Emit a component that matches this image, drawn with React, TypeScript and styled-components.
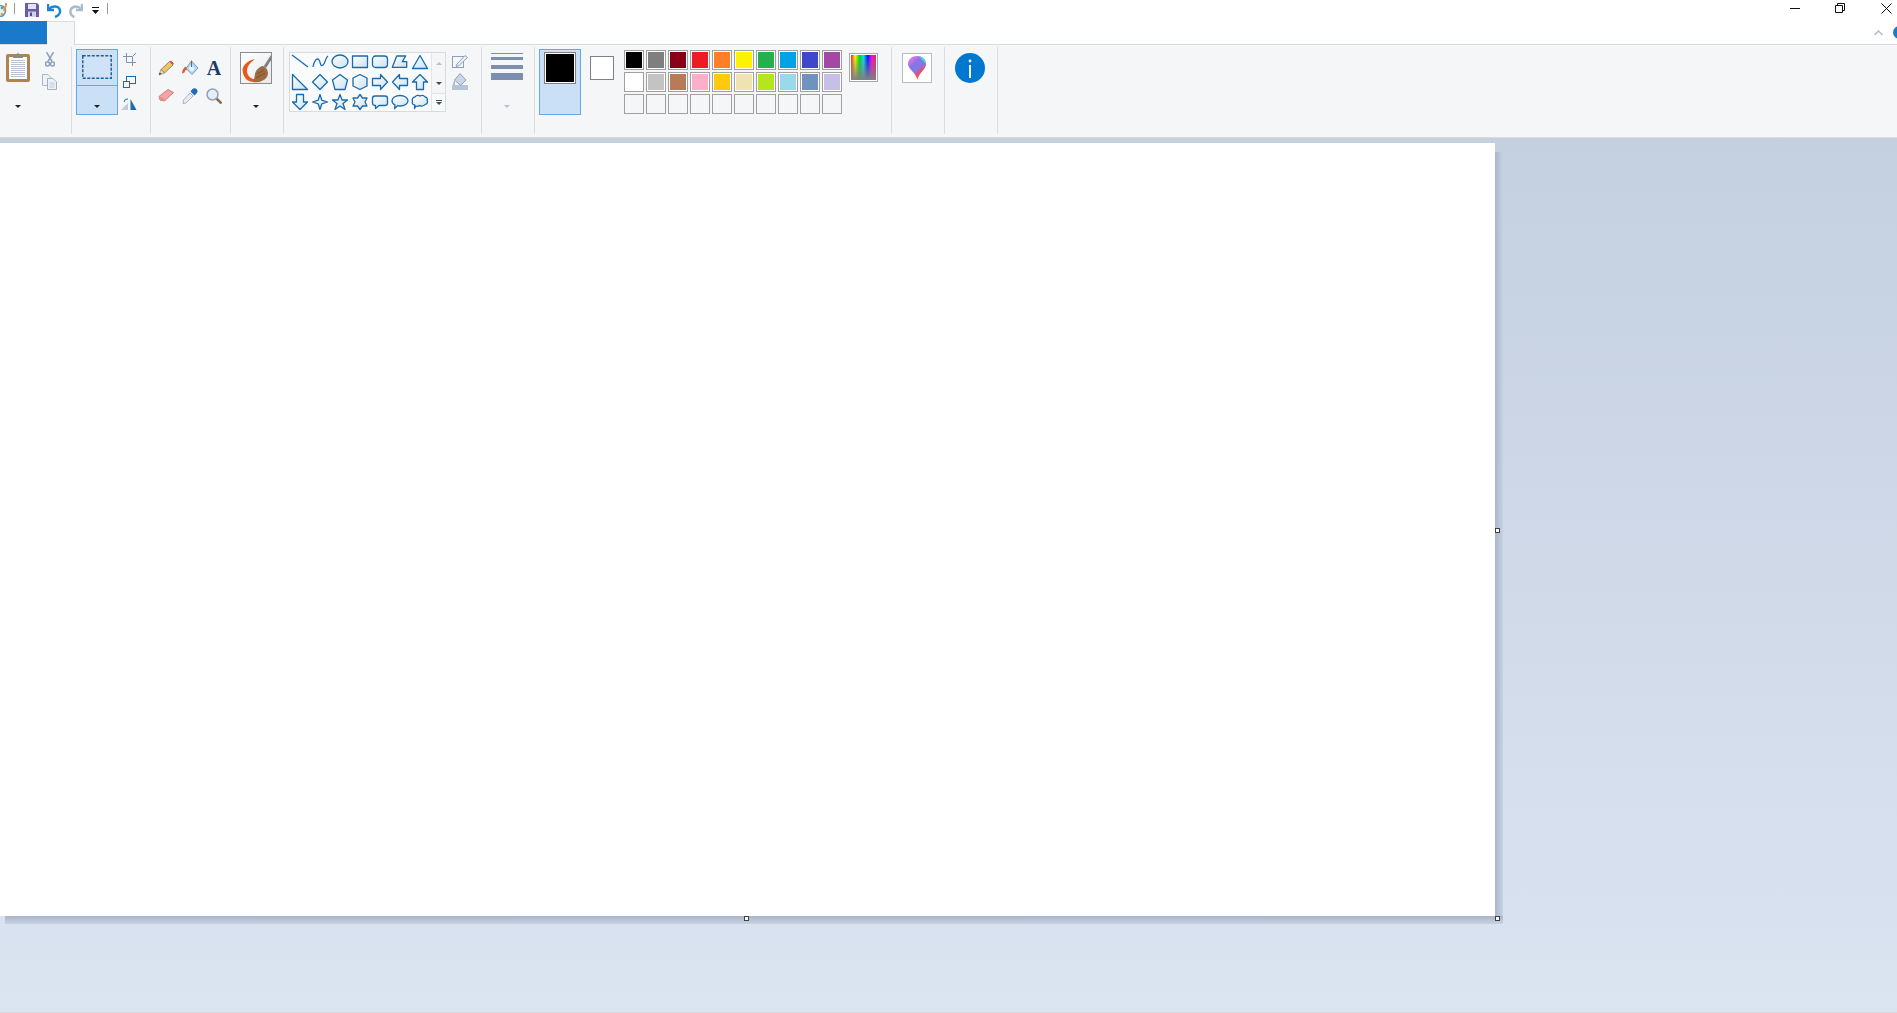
import styled, { createGlobalStyle } from "styled-components";

const GlobalStyle = createGlobalStyle`
  html, body {
    margin: 0;
    padding: 0;
    overflow: hidden;
    background: #ffffff;
    font-family: "Liberation Sans", Arial, sans-serif;
  }
  * {
    box-sizing: border-box;
  }
`;

const colorsRow1 = ["#000000", "#7f7f7f", "#880015", "#ed1c24", "#ff7f27", "#fff200", "#22b14c", "#00a2e8", "#3f48cc", "#a349a4"];
const colorsRow2 = ["#ffffff", "#c3c3c3", "#b97a57", "#ffaec9", "#ffc90e", "#efe4b0", "#b5e61d", "#99d9ea", "#7092be", "#c8bfe7"];
const emptyColors = Array.from({ length: 10 }, () => "");

// every shape of the gallery, drawn in a 20x20 cell
const shapes = [
  <path d="M2 3L18 15" fill="none" />,
  <path d="M3 15C4 9 7 5 9 8C11 11 10 15 13 13C15.500 11.500 15 6 18 4" fill="none" />,
  <ellipse cx="10" cy="9.500" rx="8" ry="6.500" />,
  <rect x="2.500" y="4" width="15" height="11.500" />,
  <rect x="2.500" y="4" width="15" height="11.500" rx="3" />,
  <path d="M6.700 4H15.700L12.300 9.700H16.700V15.300H2.300Z" />,
  <path d="M10 3.500L17.500 16.500H2.500Z" />,
  <path d="M2.500 2.500L17.500 17.500H2.500Z" />,
  <path d="M10 2.500L17.500 10L10 17.500L2.500 10Z" />,
  <path d="M10 2.500L17.500 8L15 17.500H5L2.500 8Z" />,
  <path d="M10 2.500L17 6V14L10 17.500L3 14V6Z" />,
  <path d="M2.500 6.500H10.500V2.500L17.500 10L10.500 17.500V13.500H2.500Z" />,
  <path d="M17.500 6.500H9.500V2.500L2.500 10L9.500 17.500V13.500H17.500Z" />,
  <path d="M10 2.500L17.500 10H13.500V17.500H6.500V10H2.500Z" />,
  <path d="M10 17.500L17.500 10H13.500V2.500H6.500V10H2.500Z" />,
  <path d="M10 2.500L11.800 8.200L17.500 10L11.800 11.800L10 17.500L8.200 11.800L2.500 10L8.200 8.200Z" />,
  <path d="M10 2.500L12 8H17.500L13 11.500L15 17.500L10 14L5 17.500L7 11.500L2.500 8H8Z" />,
  <path d="M10 2.500L12.500 6H17L15 10L17 14H12.500L10 17.500L7.500 14H3L5 10L3 6H7.500Z" />,
  <path d="M5 4H15Q17.500 4 17.500 6.500V11Q17.500 13.500 15 13.500H9L5.500 16.500V13.500H5Q2.500 13.500 2.500 11V6.500Q2.500 4 5 4Z" />,
  <path d="M10 3.500C14.500 3.500 18 5.800 18 8.700S14.500 14 10 14Q8.500 14 7.500 13.700L4.500 16.500L5 12.800C3 12 2 10.400 2 8.700C2 5.800 5.500 3.500 10 3.500Z" />,
  <path d="M5 5C6 3 9 3 10 4C12 3 14 3.500 15 5C17 5 18 7 17 8.500C18.500 10 17 12.500 15 12.500C14 14 11 14.500 9.500 13.500C8.500 14.500 7 14.500 6 14L4.500 16.500L4.800 13C3 13 1.500 11 2.500 9.500C1.500 7.500 3 5 5 5Z" />,
];

const App = () => {
  return (
    <Page>
      <GlobalStyle />
      <TitleBar>
        <QuickIcon $left={0}>
          <svg width="7" height="14" viewBox="0 0 7 14">
            <circle cx="0" cy="8" r="5.500" fill="#e8f1f7" stroke="#4c9ad0" strokeWidth="1.500" />
            <circle cx="2" cy="11" r="1.300" fill="#e7a03c" />
            <circle cx="2" cy="5" r="1.300" fill="#5aa65a" />
            <path d="M6.500 0L4 8" stroke="#e39244" strokeWidth="2" />
          </svg>
        </QuickIcon>
        <QuickSeparator $left={7} />
        <QuickIcon $left={10}>
          <svg width="14" height="14" viewBox="0 0 14 14">
            <path d="M0 0H12L14 2V14H0Z" fill="#6c5ba7" />
            <rect x="3" y="1" width="8" height="5" fill="#dfe6f2" />
            <rect x="3" y="8.500" width="8" height="5.500" fill="#cfd3e6" />
            <rect x="5" y="9.500" width="2" height="3.500" fill="#4d4d8f" />
          </svg>
        </QuickIcon>
        <QuickIcon $left={8}>
          <svg width="15" height="15" viewBox="0 0 15 15">
            <path d="M1 1V7H7" fill="none" stroke="#1a84d8" strokeWidth="2.500" />
            <path d="M2 6C5 2.500 12 2.500 13 7.500C13.500 10.500 11 13 8 14" fill="none" stroke="#1a84d8" strokeWidth="2.500" />
          </svg>
        </QuickIcon>
        <QuickIcon $left={7}>
          <svg width="14" height="15" viewBox="0 0 14 15">
            <path d="M13 1V7H7" fill="none" stroke="#aabbcf" strokeWidth="2.500" />
            <path d="M12 6C9 2.500 3 2.500 1.500 7.500C1 10.500 3 13 5.500 14" fill="none" stroke="#aabbcf" strokeWidth="2.500" />
          </svg>
        </QuickIcon>
        <QuickIcon $left={9}>
          <svg width="7" height="7" viewBox="0 0 7 7">
            <rect x="0" y="0" width="7" height="1" fill="#111" />
            <path d="M0 3H7L3.500 7Z" fill="#111" />
          </svg>
        </QuickIcon>
        <QuickSeparator $left={8} />
        <WindowButtons>
          <WindowButton aria-label="Minimize">
            <svg width="10" height="10" viewBox="0 0 10 10">
              <path d="M0 5.500H10" stroke="#111" />
            </svg>
          </WindowButton>
          <WindowButton aria-label="Restore">
            <svg width="10" height="10" viewBox="0 0 10 10">
              <path d="M2.500 2.500V0.500H9.500V7.500H7.500M0.500 2.500H7.500V9.500H0.500Z" fill="none" stroke="#111" />
            </svg>
          </WindowButton>
          <WindowButton aria-label="Close" $pad={18}>
            <svg width="11" height="11" viewBox="0 0 11 11">
              <path d="M0.500 0.500L10.500 10.500M10.500 0.500L0.500 10.500" stroke="#111" />
            </svg>
          </WindowButton>
        </WindowButtons>
      </TitleBar>

      <TabRow>
        <FileTab />
        <HomeTab />
        <TabRowEnd>
          <svg width="9" height="6" viewBox="0 0 9 6">
            <path d="M0.500 5L4.500 1L8.500 5" fill="none" stroke="#b4bbc6" strokeWidth="1.500" />
          </svg>
          <HelpDot />
        </TabRowEnd>
      </TabRow>

      <Ribbon>
        <Group $width={72}>
          <BigColumn $width={36}>
            <svg width="24" height="30" viewBox="0 0 24 30">
              <rect x="0" y="2" width="24" height="28" rx="2" fill="#b0824c" />
              <rect x="3" y="5" width="18" height="22" fill="#ffffff" />
              <path d="M5 8.500H19M5 10.500H19M5 12.500H19M5 14.500H19M5 16.500H19M5 18.500H19M5 20.500H19M5 22.500H19M5 24.500H19" stroke="#b7c4d6" />
              <path d="M7 6V3H10.500L12 0.500L13.500 3H17V6Z" fill="#8a8a8a" />
            </svg>
            <DropArrow />
          </BigColumn>
          <IconColumn $width={27} $top={5} $gap={7}>
            <svg width="10" height="15" viewBox="0 0 10 15">
              <path d="M1.500 0L7 9.500M8.500 0L3 9.500" stroke="#8ea2bd" strokeWidth="1.500" />
              <circle cx="2.500" cy="12" r="2" fill="none" stroke="#8ea2bd" strokeWidth="1.500" />
              <circle cx="7.500" cy="12" r="2" fill="none" stroke="#8ea2bd" strokeWidth="1.500" />
            </svg>
            <svg width="15" height="16" viewBox="0 0 15 16">
              <path d="M0.500 0.500H6L9 3.500V11.500H0.500Z" fill="#eef2f7" stroke="#a9b8cd" />
              <path d="M5.500 4.500H11L14.500 8V15.500H5.500Z" fill="#eef2f7" stroke="#a0b0c7" />
              <path d="M7.500 9H12.500M7.500 11H12.500M7.500 13H12.500" stroke="#bcc8d9" />
            </svg>
          </IconColumn>
        </Group>

        <Group $width={79} $left={4}>
          <SplitButton>
            <SplitTop>
              <svg width="30" height="24" viewBox="0 0 30 24">
                <rect x="0.750" y="0.750" width="28.500" height="22.500" fill="#cfe2f7" stroke="#1f5f99" strokeWidth="1.500" strokeDasharray="3 1.500" />
              </svg>
            </SplitTop>
            <SplitBottom>
              <DropArrow />
            </SplitBottom>
          </SplitButton>
          <IconColumn $width={16} $top={6} $gap={10} $margin={3}>
            <svg width="13" height="13" viewBox="0 0 13 13">
              <path d="M3.500 0V9.500H13M0 3.500H9.500V13M9.500 3.500L13 0" fill="none" stroke="#7f93b0" />
            </svg>
            <svg width="13" height="12" viewBox="0 0 13 12">
              <rect x="3.500" y="0.500" width="9" height="7" fill="#f5f6f7" stroke="#1c6bb0" />
              <rect x="0.500" y="5.500" width="6" height="6" fill="#f5f6f7" stroke="#1c6bb0" />
            </svg>
            <svg width="16" height="12" viewBox="0 0 16 12">
              <path d="M0 12L7 5V12Z" fill="#c8ccd2" />
              <path d="M9.500 1V12H15.500Z" fill="#1c6bb0" />
              <path d="M3 4Q3.500 0.500 7 1" fill="none" stroke="#1c6bb0" />
            </svg>
          </IconColumn>
        </Group>

        <Group $width={80} $left={3}>
          <ToolGrid>
            <svg width="16" height="16" viewBox="0 0 16 16">
              <path d="M3 9.500L11.500 1.500L15 5L6.500 13Z" fill="#ecc666" stroke="#6e6048" strokeWidth="0.700" />
              <path d="M11.500 1.500L13 0.500L16 3.500L15 5Z" fill="#d9534f" />
              <path d="M3 9.500L6.500 13L1 15Z" fill="#ead9b8" stroke="#6e6048" strokeWidth="0.500" />
              <path d="M1.800 12.500L3.300 14L1 15Z" fill="#333" />
            </svg>
            <svg width="17" height="17" viewBox="0 0 17 17">
              <path d="M9.500 1L16 8L10 14.500L4 8.500Z" fill="#b9d6ef" stroke="#6d9cc6" />
              <path d="M9 5L13 8.500L10 12L6.500 8.500Z" fill="#e9f2fa" />
              <path d="M9.500 0.500L9.500 7" stroke="#5c6d80" />
              <path d="M4 6.500Q0.500 8 0 13.500L2.500 12.500Q2.500 10 5 9.500Z" fill="#e8571b" />
            </svg>
            <ToolLetter>A</ToolLetter>
            <svg width="16" height="16" viewBox="0 0 16 16">
              <path d="M1 8.500L10 1.500L15.500 4.500L6.500 13L2 12Z" fill="#f5a3a5" stroke="#cf7f82" />
              <path d="M2 12L1 8.500L6 10.500L6.500 13Z" fill="#e08c90" />
            </svg>
            <svg width="16" height="16" viewBox="0 0 16 16">
              <path d="M10 1.500Q12.500 -1 15 1.500Q16.500 4 14 6L12.500 7.500L8.500 3.500Z" fill="#1d6cb5" />
              <path d="M8 5L11 8L4 15L1 15.500L1.500 12Z" fill="#e8ecf1" stroke="#8c99aa" strokeWidth="0.700" />
            </svg>
            <svg width="16" height="16" viewBox="0 0 16 16">
              <path d="M10 10L15.500 15.500" stroke="#8c6a4a" strokeWidth="2.500" />
              <circle cx="6.500" cy="6.500" r="5.500" fill="#e3eef8" stroke="#93a3b5" strokeWidth="1.500" />
            </svg>
          </ToolGrid>
        </Group>

        <Group $width={53}>
          <BigColumn $width={50}>
            <BrushFrame>
              <svg width="30" height="30" viewBox="0 0 30 30">
                <path d="M24 14L31 3" stroke="#7d8188" strokeWidth="3" />
                <path d="M14 6C5 8 0 14 2 20C3 25 7 29 13 29L18 27C12 27 6 24 6 18C6 13 10 9 14 6Z" fill="#e8571b" />
                <path d="M22 13C27 15 28 20 26 24C23 28 18 30 12 29C14 26 13 22 15 18C17 15 20 13 22 13Z" fill="#9c6b3f" />
                <path d="M16 21L23 17M15 25L24 20" stroke="#7d5430" />
              </svg>
            </BrushFrame>
            <DropArrow />
          </BigColumn>
        </Group>

        <Group $width={198} $left={5}>
          <Gallery>
            <ShapeGrid>
              {shapes.map((shape, i) => (
                <svg key={i} width="20" height="20" viewBox="0 0 20 20" fill={`url(#shape-fill-${i})`} stroke="#1b6aab" strokeWidth="1.300" strokeLinejoin="round">
                  <defs>
                    <linearGradient id={`shape-fill-${i}`} x1="0" y1="0" x2="1" y2="1">
                      <stop offset="0" stopColor="#ffffff" />
                      <stop offset="1" stopColor="#c9e2f1" />
                    </linearGradient>
                  </defs>
                  {shape}
                </svg>
              ))}
            </ShapeGrid>
            <GalleryScroll>
              <ScrollButton>
                <Triangle $color="#b9c0ca" $up />
              </ScrollButton>
              <ScrollButton>
                <Triangle $color="#444b55" />
              </ScrollButton>
              <ScrollMore>
                <ScrollBar />
                <Triangle $color="#444b55" />
              </ScrollMore>
            </GalleryScroll>
          </Gallery>
          <IconColumn $width={16} $top={7} $gap={5} $margin={6}>
            <svg width="16" height="14" viewBox="0 0 16 14">
              <rect x="0.500" y="2.500" width="11" height="11" fill="#f5f6f7" stroke="#8ca0bb" />
              <path d="M5 10L13 1.500L15.500 3.500L7 11.500L4 12.500Z" fill="#eef2f7" stroke="#8ca0bb" />
            </svg>
            <svg width="16" height="17" viewBox="0 0 16 17">
              <rect x="0" y="12" width="16" height="5" fill="#b7c4d6" />
              <path d="M8 0.500L14 7L8.500 12.500L2.500 7Z" fill="#c9d6e6" stroke="#8ca0bb" />
              <path d="M3 7Q0.500 9 1 12H3Z" fill="#a5b4c8" />
            </svg>
          </IconColumn>
        </Group>

        <Group $width={53}>
          <BigColumn $width={50}>
            <SizeLines>
              <SizeLine $height={1} $gap={0} />
              <SizeLine $height={3} $gap={3} />
              <SizeLine $height={4} $gap={5} />
              <SizeLine $height={7} $gap={4} />
            </SizeLines>
            <DropArrow $color="#b9c0ca" />
          </BigColumn>
        </Group>

        <Group $width={357} $left={4}>
          <ColorButton>
            <ColorSwatch $size={32} $color="#000000" />
          </ColorButton>
          <SecondColor>
            <ColorSwatch $size={24} $color="#ffffff" />
          </SecondColor>
          <Palette>
            {[...colorsRow1, ...colorsRow2, ...emptyColors].map((color, i) => (
              <PaletteCell key={i} $color={color} />
            ))}
          </Palette>
          <EditColors />
        </Group>

        <Group $width={53} $left={10}>
          <Paint3dButton>
            <svg width="22" height="26" viewBox="0 0 22 26">
              <defs>
                <linearGradient id="balloon-fill" x1="0" y1="0.100" x2="0.600" y2="1">
                  <stop offset="0" stopColor="#f77be0" />
                  <stop offset="0.350" stopColor="#8a72e8" />
                  <stop offset="0.600" stopColor="#7d7de0" />
                  <stop offset="0.800" stopColor="#f0476f" />
                  <stop offset="1" stopColor="#f9a21f" />
                </linearGradient>
              </defs>
              <path d="M11 1C16 1 20 4.500 20 9C20 14 13.500 17 11.500 25C9.500 17 2 14 2 9C2 4.500 6 1 11 1Z" fill="url(#balloon-fill)" />
              <path d="M13 1.300C17 2 20 5 20 9C18 7 15 4 13 1.300Z" fill="#3fd6e8" />
            </svg>
          </Paint3dButton>
        </Group>

        <Group $width={53} $left={10}>
          <InfoButton aria-label="Info">
            <svg width="30" height="30" viewBox="0 0 30 30">
              <circle cx="15" cy="15" r="15" fill="#0078d0" />
              <rect x="14" y="12" width="2" height="13" fill="#ffffff" />
              <circle cx="15" cy="8" r="1.400" fill="#ffffff" />
            </svg>
          </InfoButton>
        </Group>
      </Ribbon>

      <Workspace>
        <Canvas>
          <Handle $x={744} $y={916} />
          <Handle $x={1495} $y={528} />
          <Handle $x={1495} $y={916} />
        </Canvas>
      </Workspace>
    </Page>
  );
};

export default App;

const Page = styled.div`
  display: flex;
  flex-direction: column;
  width: 1897px;
  height: 100vh;
  overflow: hidden;
`;

const TitleBar = styled.div`
  display: flex;
  align-items: center;
  height: 21px;
  flex: none;
  background: #ffffff;
`;

const QuickIcon = styled.div<{ $left: number }>`
  display: flex;
  margin-left: ${(p) => p.$left}px;
  margin-top: -1px;
`;

const QuickSeparator = styled.div<{ $left: number }>`
  width: 1px;
  height: 11px;
  margin-top: -4px;
  margin-left: ${(p) => p.$left}px;
  background: #9a9a9a;
`;

const WindowButtons = styled.div`
  display: flex;
  margin-left: auto;
  margin-right: -11px;
  align-self: flex-start;
`;

const WindowButton = styled.button<{ $pad?: number }>`
  display: flex;
  align-items: center;
  width: 45px;
  height: 16px;
  padding: 0 0 0 ${(p) => p.$pad ?? 17}px;
  border: 0;
  background: transparent;
`;

const TabRow = styled.div`
  display: flex;
  height: 24px;
  flex: none;
  border-bottom: 1px solid #d9dadc;
`;

const FileTab = styled.div`
  width: 47px;
  height: 23px;
  background: #1979ca;
`;

const HomeTab = styled.div`
  width: 28px;
  height: 24px;
  background: #f5f6f7;
  border: 1px solid #d9dadc;
  border-bottom: 0;
  border-left: 0;
`;

const TabRowEnd = styled.div`
  display: flex;
  align-items: center;
  gap: 10px;
  margin-left: auto;
  margin-right: -9px;
  height: 23px;
`;

const HelpDot = styled.div`
  width: 13px;
  height: 13px;
  border-radius: 50%;
  background: #1979ca;
`;

const Ribbon = styled.div`
  display: flex;
  height: 93px;
  flex: none;
  padding-top: 2px;
  background: #f5f6f7;
  border-bottom: 1px solid #d9dadc;
`;

const Group = styled.div<{ $width: number; $left?: number }>`
  display: flex;
  align-items: flex-start;
  flex: none;
  width: ${(p) => p.$width}px;
  height: 87px;
  padding-left: ${(p) => p.$left ?? 0}px;
  border-right: 1px solid #dcdddf;
`;

const BigColumn = styled.div<{ $width: number }>`
  display: flex;
  flex-direction: column;
  align-items: center;
  justify-content: space-between;
  flex: none;
  width: ${(p) => p.$width}px;
  height: 100%;
  padding: 5px 0 26px;
`;

const DropArrow = styled.div<{ $color?: string }>`
  width: 0;
  height: 0;
  border-left: 3px solid transparent;
  border-right: 3px solid transparent;
  border-top: 3px solid ${(p) => p.$color ?? "#222222"};
`;

const IconColumn = styled.div<{ $width: number; $top: number; $gap: number; $margin?: number }>`
  display: flex;
  flex-direction: column;
  align-items: center;
  flex: none;
  width: ${(p) => p.$width}px;
  padding-top: ${(p) => p.$top}px;
  gap: ${(p) => p.$gap}px;
  margin-left: ${(p) => p.$margin ?? 0}px;
`;

const SplitButton = styled.div`
  display: flex;
  flex-direction: column;
  flex: none;
  width: 42px;
  height: 66px;
  margin-top: 2px;
  background: #c9e0f7;
  border: 1px solid #66a7e8;
`;

const SplitTop = styled.div`
  display: flex;
  align-items: center;
  justify-content: center;
  height: 36px;
  padding-bottom: 1px;
  border-bottom: 1px solid #66a7e8;
`;

const SplitBottom = styled.div`
  display: flex;
  flex: 1;
  justify-content: center;
  padding-top: 19px;
`;

const ToolGrid = styled.div`
  display: grid;
  grid-template-columns: repeat(3, 24px);
  grid-auto-rows: 28px;
  place-items: center;
  padding-top: 7px;
`;

const ToolLetter = styled.span`
  font-family: "Liberation Serif", "Times New Roman", serif;
  font-size: 20px;
  font-weight: 700;
  line-height: 20px;
  color: #1d3a6b;
`;

const BrushFrame = styled.div`
  display: flex;
  width: 32px;
  height: 32px;
  overflow: hidden;
  border: 1px solid #8c8c8c;
  background: linear-gradient(135deg, #ffffff, #e6e8eb);
`;

const Gallery = styled.div`
  display: flex;
  flex: none;
  width: 157px;
  height: 60px;
  margin-top: 5px;
  border: 1px solid #d9dadc;
  overflow: hidden;
`;

const ShapeGrid = styled.div`
  display: grid;
  grid-template-columns: repeat(7, 20px);
  grid-auto-rows: 20px;
  flex: none;
  width: 142px;
  height: 60px;
  margin-top: -1px;
  background: #f9fbfd;
  border-right: 1px solid #e3e4e6;
`;

const GalleryScroll = styled.div`
  display: flex;
  flex-direction: column;
  flex: 1;
`;

const ScrollButton = styled.div`
  display: flex;
  flex: none;
  align-items: center;
  justify-content: center;
  height: 20px;
`;

const ScrollMore = styled.div`
  display: flex;
  flex: 1;
  flex-direction: column;
  align-items: center;
  justify-content: center;
  gap: 1px;
  background: #f8f9fa;
  border-top: 1px solid #e3e4e6;
`;

const ScrollBar = styled.div`
  width: 6px;
  height: 1px;
  background: #444b55;
`;

const Triangle = styled.div<{ $color: string; $up?: boolean }>`
  width: 0;
  height: 0;
  border-left: 3px solid transparent;
  border-right: 3px solid transparent;
  ${(p) => (p.$up ? "border-bottom" : "border-top")}: 3px solid ${(p) => p.$color};
`;

const SizeLines = styled.div`
  display: flex;
  flex-direction: column;
  width: 32px;
  padding-top: 1px;
`;

const SizeLine = styled.div<{ $height: number; $gap: number }>`
  height: ${(p) => p.$height}px;
  margin-top: ${(p) => p.$gap}px;
  background: #7c8fae;
`;

const ColorButton = styled.div`
  display: flex;
  justify-content: center;
  flex: none;
  width: 42px;
  height: 66px;
  margin-top: 2px;
  padding-top: 2px;
  background: #c9e0f7;
  border: 1px solid #66a7e8;
`;

const ColorSwatch = styled.div<{ $size: number; $color: string }>`
  width: ${(p) => p.$size}px;
  height: ${(p) => p.$size}px;
  background: ${(p) => p.$color};
  border: 1px solid #808080;
  box-shadow: inset 0 0 0 1px #ffffff;
`;

const SecondColor = styled.div`
  flex: none;
  margin: 9px 0 0 9px;
`;

const Palette = styled.div`
  display: grid;
  grid-template-columns: repeat(10, 20px);
  grid-auto-rows: 20px;
  gap: 2px;
  flex: none;
  margin: 3px 0 0 10px;
`;

const PaletteCell = styled.div<{ $color: string }>`
  border: 1px solid #a0a0a0;
  background: ${(p) => p.$color || "#f5f6f7"};
  box-shadow: ${(p) => (p.$color ? "inset 0 0 0 1px #ffffff" : "none")};
`;

const EditColors = styled.div`
  flex: none;
  width: 29px;
  height: 29px;
  margin: 6px 0 0 7px;
  border: 2px solid #ffffff;
  outline: 1px solid #a8a8a8;
  outline-offset: -1px;
  background: linear-gradient(rgba(127, 127, 127, 0), #808080), linear-gradient(90deg, #ff2020, #ffff00, #00e000, #00e0ff, #0010ff, #ff00ff, #ff2020);
`;

const Paint3dButton = styled.button`
  display: flex;
  align-items: center;
  justify-content: center;
  flex: none;
  width: 30px;
  height: 30px;
  margin-top: 6px;
  padding: 0;
  background: #ffffff;
  border: 1px solid #bcbcbc;
`;

const InfoButton = styled.button`
  display: flex;
  flex: none;
  width: 30px;
  height: 30px;
  margin-top: 6px;
  padding: 0;
  border: 0;
  background: transparent;
`;

const Workspace = styled.div`
  flex: 1;
  padding-top: 5px;
  background: linear-gradient(#c4cfe0, #dbe4f1);
  border-bottom: 1px solid #d9d9d9;
`;

const Canvas = styled.div`
  position: relative;
  width: 1495px;
  height: 773px;
  background: #ffffff;

  &::before {
    content: "";
    position: absolute;
    left: 100%;
    top: 9px;
    bottom: 0;
    width: 8px;
    background: linear-gradient(90deg, #a9b5c9, #c8d2e1);
  }

  &::after {
    content: "";
    position: absolute;
    left: 5px;
    right: -8px;
    top: 100%;
    height: 8px;
    background: linear-gradient(#a9b5c9, #c8d2e1);
  }
`;

const Handle = styled.div<{ $x: number; $y: number }>`
  position: absolute;
  z-index: 1;
  left: ${(p) => p.$x}px;
  top: ${(p) => p.$y - 143}px;
  width: 5px;
  height: 5px;
  background: #ffffff;
  border: 1px solid #404040;
`;
